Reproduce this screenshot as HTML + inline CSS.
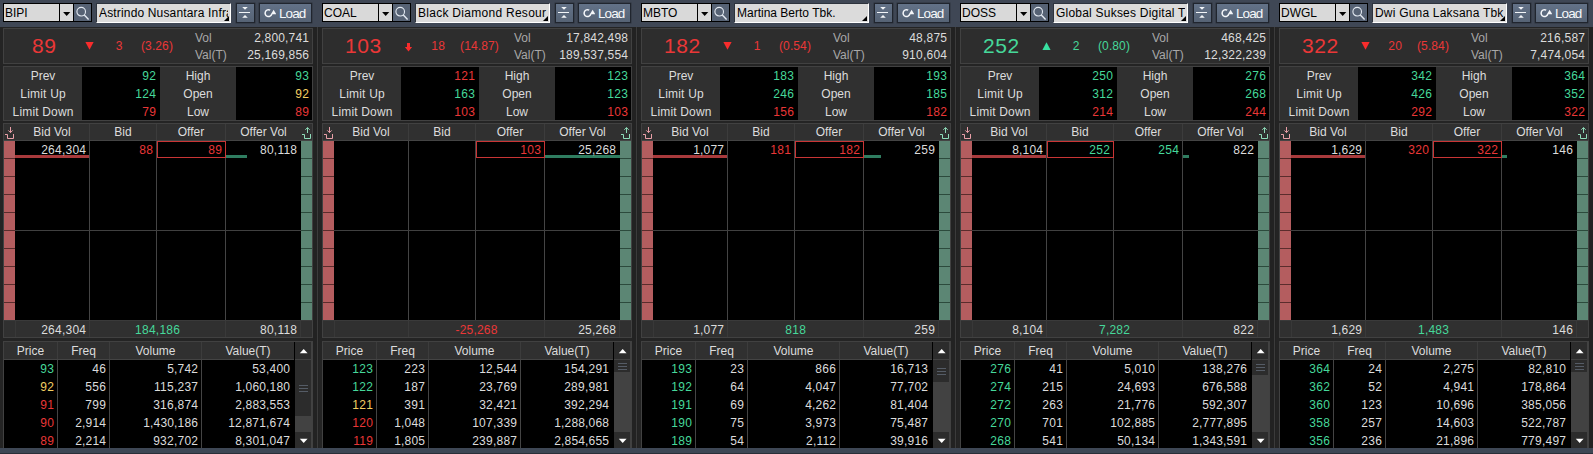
<!DOCTYPE html><html><head><meta charset="utf-8"><title>Order Book</title><style>
*{box-sizing:border-box;margin:0;padding:0}
html,body{width:1593px;height:454px;overflow:hidden;background:#242424}
body{font-family:"Liberation Sans",sans-serif;font-size:12px;color:#dcdcdc;position:relative}
.p{position:absolute;top:0;width:319px;height:454px;overflow:hidden}
.a{position:absolute}
.t{position:absolute;white-space:nowrap;line-height:14px;height:14px}
.r{text-align:right}.c{text-align:center}
.top{left:0;top:0;width:319px;height:27px;background:#3f4755}
.bot{left:0;top:448px;width:319px;height:6px;background:#3e4755;border-bottom:1px solid #2a2f38}
.gap{left:313px;top:27px;width:9px;height:421px;background:#222}
.sep{left:317px;top:27px;width:1px;height:421px;background:#3b3b3b}
.box{border:1px solid #414141;background:#2d2d2d}
.blk{background:#000}
.btn{background:linear-gradient(#637288,#566375);border:1px solid #20252e;box-shadow:0 0 0 .5px rgba(32,37,46,.55)}

.vl{width:1px;background:#444}
.hl{height:1px;background:#444}
.n{letter-spacing:.33px;margin-right:-.33px}
.n i{font-style:normal;letter-spacing:-.33px}
.n i.q{letter-spacing:0}
</style></head><body>
<div class="p" style="left:0px">
<div class="a top"></div>
<div class="a gap"></div><div class="a sep"></div>
<div class="a bot"></div>
<div class="a " style="left:3px;top:3px;width:89px;height:19px;background:#000"></div>
<div class="a " style="left:4px;top:4px;width:55px;height:17px;background:#d9d9d9"></div>
<div class="t " style="left:5px;top:6px;width:54px;color:#000;">BIPI</div>
<div class="a " style="left:60px;top:4px;width:13px;height:17px;background:#d9d9d9"></div>
<svg class="a" style="left:60px;top:4px" width="13" height="18"><path d="M3.1 8h7.2l-3.6 3.9z" fill="#000"/></svg>
<div class="a " style="left:74px;top:4px;width:17px;height:17px;background:#566274"></div>
<svg class="a" style="left:74px;top:4px" width="17" height="18"><circle cx="7.2" cy="7.7" r="4.3" fill="none" stroke="#e4eaf2" stroke-width="1.1"/><path d="M10.3 11l4.3 4.4" stroke="#e4eaf2" stroke-width="1.4" fill="none"/></svg>
<div class="a " style="left:96px;top:3px;width:135px;height:20px;background:#dbdbdb;border-bottom:1px solid #fff;border-right:1px solid #fff;border-top:1px solid #2d333d;border-left:1px solid #2d333d"></div>
<div class="t" style="left:99px;top:6px;width:129px;color:#000;overflow:hidden;letter-spacing:.16px">Astrindo Nusantara Infra</div>
<svg class="a" style="left:224px;top:16px" width="5" height="5"><path d="M5 0v5h-5z" fill="#000"/></svg>
<div class="a btn" style="left:236px;top:3px;width:18.5px;height:19.5px;"></div>
<svg class="a" style="left:236px;top:4px" width="18" height="18"><path d="M6.2 3h5.6l-2.8 2.8z M6.2 13.7h5.6l-2.8-2.8z" fill="#f2f5f8"/><path d="M3 8.5h11" stroke="#f2f5f8" stroke-width="1"/></svg>
<div class="a btn" style="left:259px;top:3px;width:53px;height:19.5px;"></div>
<svg class="a" style="left:263px;top:7px" width="13" height="13"><path d="M7.2 3.2A3.4 3.4 0 1 0 8.8 7" fill="none" stroke="#f6f8fb" stroke-width="1.5"/><path d="M7.9 7.2L10.6 2.7L13.3 7.2Z" fill="#f4f6f9"/></svg>
<div class="t " style="left:279px;top:7px;width:34px;color:#f6f8fa;font-size:13.5px;letter-spacing:-0.9px">Load</div>
<div class="a box" style="left:3px;top:28px;width:310px;height:36px;"></div>
<div class="t c" style="left:4px;top:33px;width:80px;color:#ea3737;font-size:21px;line-height:26px;height:26px;letter-spacing:.55px;text-indent:.55px">89</div>
<svg class="a" style="left:85px;top:42px" width="9" height="8"><path d="M0.4 0h8.2l-4.1 7.8z" fill="#f82c2c"/></svg>
<div class="t c" style="left:99px;top:39px;width:40px;color:#ea3737;"><span style="letter-spacing:0.326px;margin-right:-0.326px">3</span></div>
<div class="t " style="left:141px;top:39px;width:60px;color:#ea3737;"><span style="letter-spacing:0.109px;margin-right:-0.109px">(3.26)</span></div>
<div class="t " style="left:195px;top:31px;width:40px;color:#a8a8a8;">Vol</div>
<div class="t " style="left:195px;top:48px;width:40px;color:#a8a8a8;">Val(T)</div>
<div class="t r" style="left:229px;top:31px;width:80px;"><span style="letter-spacing:0.179px;margin-right:-0.179px">2,800,741</span></div>
<div class="t r" style="left:229px;top:48px;width:80px;"><span style="letter-spacing:0.194px;margin-right:-0.194px">25,169,856</span></div>
<div class="a box" style="left:3px;top:66px;width:310px;height:55px;background:#303030"></div>
<div class="a blk" style="left:82px;top:67px;width:78px;height:53px;"></div>
<div class="a blk" style="left:236px;top:67px;width:76px;height:53px;"></div>
<div class="t c" style="left:4px;top:69px;width:78px;">Prev</div>
<div class="t r" style="left:82px;top:69px;width:74px;color:#46d89a;"><span style="letter-spacing:0.326px;margin-right:-0.326px">92</span></div>
<div class="t c" style="left:160px;top:69px;width:76px;">High</div>
<div class="t r" style="left:236px;top:69px;width:73px;color:#46d89a;"><span style="letter-spacing:0.326px;margin-right:-0.326px">93</span></div>
<div class="t c" style="left:4px;top:87px;width:78px;letter-spacing:.21px;text-indent:.21px">Limit Up</div>
<div class="t r" style="left:82px;top:87px;width:74px;color:#46d89a;"><span style="letter-spacing:0.326px;margin-right:-0.326px">124</span></div>
<div class="t c" style="left:160px;top:87px;width:76px;">Open</div>
<div class="t r" style="left:236px;top:87px;width:73px;color:#f3cf62;"><span style="letter-spacing:0.326px;margin-right:-0.326px">92</span></div>
<div class="t c" style="left:4px;top:105px;width:78px;letter-spacing:.17px;text-indent:.17px">Limit Down</div>
<div class="t r" style="left:82px;top:105px;width:74px;color:#ea3737;"><span style="letter-spacing:0.326px;margin-right:-0.326px">79</span></div>
<div class="t c" style="left:160px;top:105px;width:76px;">Low</div>
<div class="t r" style="left:236px;top:105px;width:73px;color:#ea3737;"><span style="letter-spacing:0.326px;margin-right:-0.326px">89</span></div>
<div class="a box" style="left:3px;top:123px;width:310px;height:215px;background:#303030"></div>
<div class="a blk" style="left:4px;top:141px;width:297px;height:180px;"></div>
<div class="a " style="left:4px;top:141px;width:11px;height:180px;background:#b45d5f"></div>
<div class="a " style="left:301px;top:141px;width:11px;height:180px;background:#5c8674"></div>
<div class="a " style="left:4px;top:158px;width:11px;height:1px;background:#5a2c2c"></div>
<div class="a " style="left:301px;top:158px;width:11px;height:1px;background:#2c4a3c"></div>
<div class="a " style="left:4px;top:176px;width:11px;height:1px;background:#5a2c2c"></div>
<div class="a " style="left:301px;top:176px;width:11px;height:1px;background:#2c4a3c"></div>
<div class="a " style="left:4px;top:194px;width:11px;height:1px;background:#5a2c2c"></div>
<div class="a " style="left:301px;top:194px;width:11px;height:1px;background:#2c4a3c"></div>
<div class="a " style="left:4px;top:212px;width:11px;height:1px;background:#5a2c2c"></div>
<div class="a " style="left:301px;top:212px;width:11px;height:1px;background:#2c4a3c"></div>
<div class="a " style="left:4px;top:230px;width:11px;height:1px;background:#5a2c2c"></div>
<div class="a " style="left:301px;top:230px;width:11px;height:1px;background:#2c4a3c"></div>
<div class="a " style="left:4px;top:248px;width:11px;height:1px;background:#5a2c2c"></div>
<div class="a " style="left:301px;top:248px;width:11px;height:1px;background:#2c4a3c"></div>
<div class="a " style="left:4px;top:266px;width:11px;height:1px;background:#5a2c2c"></div>
<div class="a " style="left:301px;top:266px;width:11px;height:1px;background:#2c4a3c"></div>
<div class="a " style="left:4px;top:284px;width:11px;height:1px;background:#5a2c2c"></div>
<div class="a " style="left:301px;top:284px;width:11px;height:1px;background:#2c4a3c"></div>
<div class="a " style="left:4px;top:302px;width:11px;height:1px;background:#5a2c2c"></div>
<div class="a " style="left:301px;top:302px;width:11px;height:1px;background:#2c4a3c"></div>
<div class="a vl" style="left:89px;top:124px;width:1px;height:16px;background:#3c3c3c"></div>
<div class="a vl" style="left:89px;top:140px;width:1px;height:181px;"></div>
<div class="a vl" style="left:89px;top:321px;width:1px;height:16px;background:#393939"></div>
<div class="a vl" style="left:156px;top:124px;width:1px;height:16px;background:#3c3c3c"></div>
<div class="a vl" style="left:156px;top:140px;width:1px;height:181px;"></div>
<div class="a vl" style="left:225px;top:124px;width:1px;height:16px;background:#3c3c3c"></div>
<div class="a vl" style="left:225px;top:140px;width:1px;height:181px;"></div>
<div class="a vl" style="left:225px;top:321px;width:1px;height:16px;background:#393939"></div>
<div class="a vl" style="left:15px;top:321px;width:1px;height:16px;background:#383838"></div>
<div class="a vl" style="left:300px;top:321px;width:1px;height:16px;background:#383838"></div>
<div class="t c" style="left:15px;top:125px;width:74px;">Bid Vol</div>
<div class="t c" style="left:90px;top:125px;width:66px;">Bid</div>
<div class="t c" style="left:157px;top:125px;width:68px;">Offer</div>
<div class="t c" style="left:226px;top:125px;width:75px;">Offer Vol</div>
<div class="a hl" style="left:4px;top:140px;width:308px;height:1px;"></div>
<div class="a hl" style="left:15px;top:230px;width:286px;height:1px;background:#404040"></div>
<div class="a hl" style="left:4px;top:320px;width:308px;height:1px;background:#3a3a3a"></div>
<svg class="a" style="left:4px;top:126px" width="11" height="14"><path d="M1 8.5H3.5V12.5H9.5V8M6.5 1V6.6M4.3 4.4L6.5 6.6L8.7 4.4" fill="none" stroke="#eaa0a8" stroke-width="1" stroke-linejoin="round"/></svg>
<svg class="a" style="left:301px;top:126px" width="11" height="14"><path d="M1 8.5H3.5V12.5H9.5V8M6.5 7V1.6M4.3 3.8L6.5 1.6L8.7 3.8" fill="none" stroke="#8fdcb9" stroke-width="1" stroke-linejoin="round"/></svg>
<div class="a " style="left:15px;top:155px;width:74px;height:3px;background:#a83a3c"></div>
<div class="a " style="left:226px;top:155px;width:21px;height:3px;background:#2f7d60"></div>
<div class="t r" style="left:15px;top:143px;width:71px;"><span style="letter-spacing:0.232px;margin-right:-0.232px">264,304</span></div>
<div class="t r" style="left:90px;top:143px;width:63px;color:#ea3737;"><span style="letter-spacing:0.326px;margin-right:-0.326px">88</span></div>
<div class="t r" style="left:157px;top:143px;width:65px;color:#ea3737;"><span style="letter-spacing:0.326px;margin-right:-0.326px">89</span></div>
<div class="t r" style="left:226px;top:143px;width:71px;"><span style="letter-spacing:0.216px;margin-right:-0.216px">80,118</span></div>
<div class="a " style="left:157px;top:141px;width:69px;height:17px;border:1px solid #c93535"></div>
<div class="t r" style="left:15px;top:323px;width:71px;"><span style="letter-spacing:0.232px;margin-right:-0.232px">264,304</span></div>
<div class="t c" style="left:90px;top:323px;width:135px;color:#46d89a;"><span style="letter-spacing:0.232px;margin-right:-0.232px">184,186</span></div>
<div class="t r" style="left:226px;top:323px;width:71px;"><span style="letter-spacing:0.216px;margin-right:-0.216px">80,118</span></div>
<div class="a box" style="left:3px;top:341px;width:310px;height:107px;background:#303030;border-bottom:none"></div>
<div class="a blk" style="left:4px;top:360px;width:290px;height:88px;"></div>
<div class="a " style="left:294px;top:342px;width:1px;height:106px;background:#000"></div>
<div class="a vl" style="left:57px;top:342px;width:1px;height:17px;background:#3c3c3c"></div>
<div class="a vl" style="left:57px;top:359px;width:1px;height:89px;"></div>
<div class="a vl" style="left:109px;top:342px;width:1px;height:17px;background:#3c3c3c"></div>
<div class="a vl" style="left:109px;top:359px;width:1px;height:89px;"></div>
<div class="a vl" style="left:201px;top:342px;width:1px;height:17px;background:#3c3c3c"></div>
<div class="a vl" style="left:201px;top:359px;width:1px;height:89px;"></div>
<div class="t c" style="left:4px;top:344px;width:53px;">Price</div>
<div class="t c" style="left:58px;top:344px;width:51px;">Freq</div>
<div class="t c" style="left:110px;top:344px;width:91px;">Volume</div>
<div class="t c" style="left:202px;top:344px;width:92px;">Value(T)</div>
<div class="t r" style="left:4px;top:362px;width:50px;color:#46d89a;"><span style="letter-spacing:0.326px;margin-right:-0.326px">93</span></div>
<div class="t r" style="left:58px;top:362px;width:48px;"><span style="letter-spacing:0.326px;margin-right:-0.326px">46</span></div>
<div class="t r" style="left:108px;top:362px;width:90px;"><span style="letter-spacing:0.194px;margin-right:-0.194px">5,742</span></div>
<div class="t r" style="left:202px;top:362px;width:88px;"><span style="letter-spacing:0.216px;margin-right:-0.216px">53,400</span></div>
<div class="t r" style="left:4px;top:380px;width:50px;color:#f3cf62;"><span style="letter-spacing:0.326px;margin-right:-0.326px">92</span></div>
<div class="t r" style="left:58px;top:380px;width:48px;"><span style="letter-spacing:0.326px;margin-right:-0.326px">556</span></div>
<div class="t r" style="left:108px;top:380px;width:90px;"><span style="letter-spacing:0.232px;margin-right:-0.232px">115,237</span></div>
<div class="t r" style="left:202px;top:380px;width:88px;"><span style="letter-spacing:0.179px;margin-right:-0.179px">1,060,180</span></div>
<div class="t r" style="left:4px;top:398px;width:50px;color:#ea3737;"><span style="letter-spacing:0.326px;margin-right:-0.326px">91</span></div>
<div class="t r" style="left:58px;top:398px;width:48px;"><span style="letter-spacing:0.326px;margin-right:-0.326px">799</span></div>
<div class="t r" style="left:108px;top:398px;width:90px;"><span style="letter-spacing:0.232px;margin-right:-0.232px">316,874</span></div>
<div class="t r" style="left:202px;top:398px;width:88px;"><span style="letter-spacing:0.179px;margin-right:-0.179px">2,883,553</span></div>
<div class="t r" style="left:4px;top:416px;width:50px;color:#ea3737;"><span style="letter-spacing:0.326px;margin-right:-0.326px">90</span></div>
<div class="t r" style="left:58px;top:416px;width:48px;"><span style="letter-spacing:0.194px;margin-right:-0.194px">2,914</span></div>
<div class="t r" style="left:108px;top:416px;width:90px;"><span style="letter-spacing:0.179px;margin-right:-0.179px">1,430,186</span></div>
<div class="t r" style="left:202px;top:416px;width:88px;"><span style="letter-spacing:0.194px;margin-right:-0.194px">12,871,674</span></div>
<div class="t r" style="left:4px;top:434px;width:50px;color:#ea3737;"><span style="letter-spacing:0.326px;margin-right:-0.326px">89</span></div>
<div class="t r" style="left:58px;top:434px;width:48px;"><span style="letter-spacing:0.194px;margin-right:-0.194px">2,214</span></div>
<div class="t r" style="left:108px;top:434px;width:90px;"><span style="letter-spacing:0.232px;margin-right:-0.232px">932,702</span></div>
<div class="t r" style="left:202px;top:434px;width:88px;"><span style="letter-spacing:0.179px;margin-right:-0.179px">8,301,047</span></div>
<div class="a hl" style="left:4px;top:359px;width:290px;height:1px;"></div>
<div class="a " style="left:295px;top:342px;width:17px;height:106px;background:#424242"></div>
<div class="a " style="left:295px;top:342px;width:16px;height:17px;background:#2c2c2c"></div>
<div class="a " style="left:295px;top:432px;width:16px;height:16px;background:#2c2c2c"></div>
<div class="a " style="left:295px;top:360px;width:16px;height:56px;background:#2c2c2c"></div>
<svg class="a" style="left:296px;top:384px" width="16" height="9"><path d="M3 1.5h9M3 4.5h9M3 7.5h9" stroke="#555c66" stroke-width="1"/></svg>
<svg class="a" style="left:296px;top:342px" width="16" height="18"><path d="M3.8 11.3h7.8l-3.9-4.3z" fill="#fff"/></svg>
<svg class="a" style="left:296px;top:432px" width="16" height="16"><path d="M3.8 6.7h7.8l-3.9 4.3z" fill="#fff"/></svg>
</div>
<div class="p" style="left:319px">
<div class="a top"></div>
<div class="a gap"></div><div class="a sep"></div>
<div class="a bot"></div>
<div class="a " style="left:3px;top:3px;width:89px;height:19px;background:#000"></div>
<div class="a " style="left:4px;top:4px;width:55px;height:17px;background:#d9d9d9"></div>
<div class="t " style="left:5px;top:6px;width:54px;color:#000;">COAL</div>
<div class="a " style="left:60px;top:4px;width:13px;height:17px;background:#d9d9d9"></div>
<svg class="a" style="left:60px;top:4px" width="13" height="18"><path d="M3.1 8h7.2l-3.6 3.9z" fill="#000"/></svg>
<div class="a " style="left:74px;top:4px;width:17px;height:17px;background:#566274"></div>
<svg class="a" style="left:74px;top:4px" width="17" height="18"><circle cx="7.2" cy="7.7" r="4.3" fill="none" stroke="#e4eaf2" stroke-width="1.1"/><path d="M10.3 11l4.3 4.4" stroke="#e4eaf2" stroke-width="1.4" fill="none"/></svg>
<div class="a " style="left:96px;top:3px;width:135px;height:20px;background:#dbdbdb;border-bottom:1px solid #fff;border-right:1px solid #fff;border-top:1px solid #2d333d;border-left:1px solid #2d333d"></div>
<div class="t" style="left:99px;top:6px;width:129px;color:#000;overflow:hidden;letter-spacing:.28px">Black Diamond Resour</div>
<svg class="a" style="left:224px;top:16px" width="5" height="5"><path d="M5 0v5h-5z" fill="#000"/></svg>
<div class="a btn" style="left:236px;top:3px;width:18.5px;height:19.5px;"></div>
<svg class="a" style="left:236px;top:4px" width="18" height="18"><path d="M6.2 3h5.6l-2.8 2.8z M6.2 13.7h5.6l-2.8-2.8z" fill="#f2f5f8"/><path d="M3 8.5h11" stroke="#f2f5f8" stroke-width="1"/></svg>
<div class="a btn" style="left:259px;top:3px;width:53px;height:19.5px;"></div>
<svg class="a" style="left:263px;top:7px" width="13" height="13"><path d="M7.2 3.2A3.4 3.4 0 1 0 8.8 7" fill="none" stroke="#f6f8fb" stroke-width="1.5"/><path d="M7.9 7.2L10.6 2.7L13.3 7.2Z" fill="#f4f6f9"/></svg>
<div class="t " style="left:279px;top:7px;width:34px;color:#f6f8fa;font-size:13.5px;letter-spacing:-0.9px">Load</div>
<div class="a box" style="left:3px;top:28px;width:310px;height:36px;"></div>
<div class="t c" style="left:4px;top:33px;width:80px;color:#ea3737;font-size:21px;line-height:26px;height:26px;letter-spacing:.55px;text-indent:.55px">103</div>
<svg class="a" style="left:85px;top:42.7px" width="9" height="9"><path d="M3 0h3v4h2.15L4.5 8.4L0.85 4H3z" fill="#f82c2c"/></svg>
<div class="t c" style="left:99px;top:39px;width:40px;color:#ea3737;"><span style="letter-spacing:0.326px;margin-right:-0.326px">18</span></div>
<div class="t " style="left:141px;top:39px;width:60px;color:#ea3737;"><span style="letter-spacing:0.14px;margin-right:-0.14px">(14.87)</span></div>
<div class="t " style="left:195px;top:31px;width:40px;color:#a8a8a8;">Vol</div>
<div class="t " style="left:195px;top:48px;width:40px;color:#a8a8a8;">Val(T)</div>
<div class="t r" style="left:229px;top:31px;width:80px;"><span style="letter-spacing:0.194px;margin-right:-0.194px">17,842,498</span></div>
<div class="t r" style="left:229px;top:48px;width:80px;"><span style="letter-spacing:0.206px;margin-right:-0.206px">189,537,554</span></div>
<div class="a box" style="left:3px;top:66px;width:310px;height:55px;background:#303030"></div>
<div class="a blk" style="left:82px;top:67px;width:78px;height:53px;"></div>
<div class="a blk" style="left:236px;top:67px;width:76px;height:53px;"></div>
<div class="t c" style="left:4px;top:69px;width:78px;">Prev</div>
<div class="t r" style="left:82px;top:69px;width:74px;color:#ea3737;"><span style="letter-spacing:0.326px;margin-right:-0.326px">121</span></div>
<div class="t c" style="left:160px;top:69px;width:76px;">High</div>
<div class="t r" style="left:236px;top:69px;width:73px;color:#46d89a;"><span style="letter-spacing:0.326px;margin-right:-0.326px">123</span></div>
<div class="t c" style="left:4px;top:87px;width:78px;letter-spacing:.21px;text-indent:.21px">Limit Up</div>
<div class="t r" style="left:82px;top:87px;width:74px;color:#46d89a;"><span style="letter-spacing:0.326px;margin-right:-0.326px">163</span></div>
<div class="t c" style="left:160px;top:87px;width:76px;">Open</div>
<div class="t r" style="left:236px;top:87px;width:73px;color:#46d89a;"><span style="letter-spacing:0.326px;margin-right:-0.326px">123</span></div>
<div class="t c" style="left:4px;top:105px;width:78px;letter-spacing:.17px;text-indent:.17px">Limit Down</div>
<div class="t r" style="left:82px;top:105px;width:74px;color:#ea3737;"><span style="letter-spacing:0.326px;margin-right:-0.326px">103</span></div>
<div class="t c" style="left:160px;top:105px;width:76px;">Low</div>
<div class="t r" style="left:236px;top:105px;width:73px;color:#ea3737;"><span style="letter-spacing:0.326px;margin-right:-0.326px">103</span></div>
<div class="a box" style="left:3px;top:123px;width:310px;height:215px;background:#303030"></div>
<div class="a blk" style="left:4px;top:141px;width:297px;height:180px;"></div>
<div class="a " style="left:4px;top:141px;width:11px;height:180px;background:#b45d5f"></div>
<div class="a " style="left:301px;top:141px;width:11px;height:180px;background:#5c8674"></div>
<div class="a " style="left:4px;top:158px;width:11px;height:1px;background:#5a2c2c"></div>
<div class="a " style="left:301px;top:158px;width:11px;height:1px;background:#2c4a3c"></div>
<div class="a " style="left:4px;top:176px;width:11px;height:1px;background:#5a2c2c"></div>
<div class="a " style="left:301px;top:176px;width:11px;height:1px;background:#2c4a3c"></div>
<div class="a " style="left:4px;top:194px;width:11px;height:1px;background:#5a2c2c"></div>
<div class="a " style="left:301px;top:194px;width:11px;height:1px;background:#2c4a3c"></div>
<div class="a " style="left:4px;top:212px;width:11px;height:1px;background:#5a2c2c"></div>
<div class="a " style="left:301px;top:212px;width:11px;height:1px;background:#2c4a3c"></div>
<div class="a " style="left:4px;top:230px;width:11px;height:1px;background:#5a2c2c"></div>
<div class="a " style="left:301px;top:230px;width:11px;height:1px;background:#2c4a3c"></div>
<div class="a " style="left:4px;top:248px;width:11px;height:1px;background:#5a2c2c"></div>
<div class="a " style="left:301px;top:248px;width:11px;height:1px;background:#2c4a3c"></div>
<div class="a " style="left:4px;top:266px;width:11px;height:1px;background:#5a2c2c"></div>
<div class="a " style="left:301px;top:266px;width:11px;height:1px;background:#2c4a3c"></div>
<div class="a " style="left:4px;top:284px;width:11px;height:1px;background:#5a2c2c"></div>
<div class="a " style="left:301px;top:284px;width:11px;height:1px;background:#2c4a3c"></div>
<div class="a " style="left:4px;top:302px;width:11px;height:1px;background:#5a2c2c"></div>
<div class="a " style="left:301px;top:302px;width:11px;height:1px;background:#2c4a3c"></div>
<div class="a vl" style="left:89px;top:124px;width:1px;height:16px;background:#3c3c3c"></div>
<div class="a vl" style="left:89px;top:140px;width:1px;height:181px;"></div>
<div class="a vl" style="left:89px;top:321px;width:1px;height:16px;background:#393939"></div>
<div class="a vl" style="left:156px;top:124px;width:1px;height:16px;background:#3c3c3c"></div>
<div class="a vl" style="left:156px;top:140px;width:1px;height:181px;"></div>
<div class="a vl" style="left:225px;top:124px;width:1px;height:16px;background:#3c3c3c"></div>
<div class="a vl" style="left:225px;top:140px;width:1px;height:181px;"></div>
<div class="a vl" style="left:225px;top:321px;width:1px;height:16px;background:#393939"></div>
<div class="a vl" style="left:15px;top:321px;width:1px;height:16px;background:#383838"></div>
<div class="a vl" style="left:300px;top:321px;width:1px;height:16px;background:#383838"></div>
<div class="t c" style="left:15px;top:125px;width:74px;">Bid Vol</div>
<div class="t c" style="left:90px;top:125px;width:66px;">Bid</div>
<div class="t c" style="left:157px;top:125px;width:68px;">Offer</div>
<div class="t c" style="left:226px;top:125px;width:75px;">Offer Vol</div>
<div class="a hl" style="left:4px;top:140px;width:308px;height:1px;"></div>
<div class="a hl" style="left:15px;top:230px;width:286px;height:1px;background:#404040"></div>
<div class="a hl" style="left:4px;top:320px;width:308px;height:1px;background:#3a3a3a"></div>
<svg class="a" style="left:4px;top:126px" width="11" height="14"><path d="M1 8.5H3.5V12.5H9.5V8M6.5 1V6.6M4.3 4.4L6.5 6.6L8.7 4.4" fill="none" stroke="#eaa0a8" stroke-width="1" stroke-linejoin="round"/></svg>
<svg class="a" style="left:301px;top:126px" width="11" height="14"><path d="M1 8.5H3.5V12.5H9.5V8M6.5 7V1.6M4.3 3.8L6.5 1.6L8.7 3.8" fill="none" stroke="#8fdcb9" stroke-width="1" stroke-linejoin="round"/></svg>
<div class="a " style="left:226px;top:155px;width:75px;height:3px;background:#2f7d60"></div>
<div class="t r" style="left:15px;top:143px;width:71px;"></div>
<div class="t r" style="left:90px;top:143px;width:63px;color:#ea3737;"></div>
<div class="t r" style="left:157px;top:143px;width:65px;color:#ea3737;"><span style="letter-spacing:0.326px;margin-right:-0.326px">103</span></div>
<div class="t r" style="left:226px;top:143px;width:71px;"><span style="letter-spacing:0.216px;margin-right:-0.216px">25,268</span></div>
<div class="a " style="left:157px;top:141px;width:69px;height:17px;border:1px solid #c93535"></div>
<div class="t r" style="left:15px;top:323px;width:71px;"></div>
<div class="t c" style="left:90px;top:323px;width:135px;color:#ea3737;"><span style="letter-spacing:0.186px;margin-right:-0.186px">-25,268</span></div>
<div class="t r" style="left:226px;top:323px;width:71px;"><span style="letter-spacing:0.216px;margin-right:-0.216px">25,268</span></div>
<div class="a box" style="left:3px;top:341px;width:310px;height:107px;background:#303030;border-bottom:none"></div>
<div class="a blk" style="left:4px;top:360px;width:290px;height:88px;"></div>
<div class="a " style="left:294px;top:342px;width:1px;height:106px;background:#000"></div>
<div class="a vl" style="left:57px;top:342px;width:1px;height:17px;background:#3c3c3c"></div>
<div class="a vl" style="left:57px;top:359px;width:1px;height:89px;"></div>
<div class="a vl" style="left:109px;top:342px;width:1px;height:17px;background:#3c3c3c"></div>
<div class="a vl" style="left:109px;top:359px;width:1px;height:89px;"></div>
<div class="a vl" style="left:201px;top:342px;width:1px;height:17px;background:#3c3c3c"></div>
<div class="a vl" style="left:201px;top:359px;width:1px;height:89px;"></div>
<div class="t c" style="left:4px;top:344px;width:53px;">Price</div>
<div class="t c" style="left:58px;top:344px;width:51px;">Freq</div>
<div class="t c" style="left:110px;top:344px;width:91px;">Volume</div>
<div class="t c" style="left:202px;top:344px;width:92px;">Value(T)</div>
<div class="t r" style="left:4px;top:362px;width:50px;color:#46d89a;"><span style="letter-spacing:0.326px;margin-right:-0.326px">123</span></div>
<div class="t r" style="left:58px;top:362px;width:48px;"><span style="letter-spacing:0.326px;margin-right:-0.326px">223</span></div>
<div class="t r" style="left:108px;top:362px;width:90px;"><span style="letter-spacing:0.216px;margin-right:-0.216px">12,544</span></div>
<div class="t r" style="left:202px;top:362px;width:88px;"><span style="letter-spacing:0.232px;margin-right:-0.232px">154,291</span></div>
<div class="t r" style="left:4px;top:380px;width:50px;color:#46d89a;"><span style="letter-spacing:0.326px;margin-right:-0.326px">122</span></div>
<div class="t r" style="left:58px;top:380px;width:48px;"><span style="letter-spacing:0.326px;margin-right:-0.326px">187</span></div>
<div class="t r" style="left:108px;top:380px;width:90px;"><span style="letter-spacing:0.216px;margin-right:-0.216px">23,769</span></div>
<div class="t r" style="left:202px;top:380px;width:88px;"><span style="letter-spacing:0.232px;margin-right:-0.232px">289,981</span></div>
<div class="t r" style="left:4px;top:398px;width:50px;color:#f3cf62;"><span style="letter-spacing:0.326px;margin-right:-0.326px">121</span></div>
<div class="t r" style="left:58px;top:398px;width:48px;"><span style="letter-spacing:0.326px;margin-right:-0.326px">391</span></div>
<div class="t r" style="left:108px;top:398px;width:90px;"><span style="letter-spacing:0.216px;margin-right:-0.216px">32,421</span></div>
<div class="t r" style="left:202px;top:398px;width:88px;"><span style="letter-spacing:0.232px;margin-right:-0.232px">392,294</span></div>
<div class="t r" style="left:4px;top:416px;width:50px;color:#ea3737;"><span style="letter-spacing:0.326px;margin-right:-0.326px">120</span></div>
<div class="t r" style="left:58px;top:416px;width:48px;"><span style="letter-spacing:0.194px;margin-right:-0.194px">1,048</span></div>
<div class="t r" style="left:108px;top:416px;width:90px;"><span style="letter-spacing:0.232px;margin-right:-0.232px">107,339</span></div>
<div class="t r" style="left:202px;top:416px;width:88px;"><span style="letter-spacing:0.179px;margin-right:-0.179px">1,288,068</span></div>
<div class="t r" style="left:4px;top:434px;width:50px;color:#ea3737;"><span style="letter-spacing:0.326px;margin-right:-0.326px">119</span></div>
<div class="t r" style="left:58px;top:434px;width:48px;"><span style="letter-spacing:0.194px;margin-right:-0.194px">1,805</span></div>
<div class="t r" style="left:108px;top:434px;width:90px;"><span style="letter-spacing:0.232px;margin-right:-0.232px">239,887</span></div>
<div class="t r" style="left:202px;top:434px;width:88px;"><span style="letter-spacing:0.179px;margin-right:-0.179px">2,854,655</span></div>
<div class="a hl" style="left:4px;top:359px;width:290px;height:1px;"></div>
<div class="a " style="left:295px;top:342px;width:17px;height:106px;background:#424242"></div>
<div class="a " style="left:295px;top:342px;width:16px;height:17px;background:#2c2c2c"></div>
<div class="a " style="left:295px;top:432px;width:16px;height:16px;background:#2c2c2c"></div>
<div class="a " style="left:295px;top:360px;width:16px;height:12px;background:#2c2c2c"></div>
<svg class="a" style="left:296px;top:362px" width="16" height="9"><path d="M3 1.5h9M3 4.5h9M3 7.5h9" stroke="#555c66" stroke-width="1"/></svg>
<svg class="a" style="left:296px;top:342px" width="16" height="18"><path d="M3.8 11.3h7.8l-3.9-4.3z" fill="#fff"/></svg>
<svg class="a" style="left:296px;top:432px" width="16" height="16"><path d="M3.8 6.7h7.8l-3.9 4.3z" fill="#fff"/></svg>
</div>
<div class="p" style="left:638px">
<div class="a top"></div>
<div class="a gap"></div><div class="a sep"></div>
<div class="a bot"></div>
<div class="a " style="left:3px;top:3px;width:89px;height:19px;background:#000"></div>
<div class="a " style="left:4px;top:4px;width:55px;height:17px;background:#d9d9d9"></div>
<div class="t " style="left:5px;top:6px;width:54px;color:#000;">MBTO</div>
<div class="a " style="left:60px;top:4px;width:13px;height:17px;background:#d9d9d9"></div>
<svg class="a" style="left:60px;top:4px" width="13" height="18"><path d="M3.1 8h7.2l-3.6 3.9z" fill="#000"/></svg>
<div class="a " style="left:74px;top:4px;width:17px;height:17px;background:#566274"></div>
<svg class="a" style="left:74px;top:4px" width="17" height="18"><circle cx="7.2" cy="7.7" r="4.3" fill="none" stroke="#e4eaf2" stroke-width="1.1"/><path d="M10.3 11l4.3 4.4" stroke="#e4eaf2" stroke-width="1.4" fill="none"/></svg>
<div class="a " style="left:96px;top:3px;width:135px;height:20px;background:#dbdbdb;border-bottom:1px solid #fff;border-right:1px solid #fff;border-top:1px solid #2d333d;border-left:1px solid #2d333d"></div>
<div class="t" style="left:99px;top:6px;width:129px;color:#000;overflow:hidden;letter-spacing:0px">Martina Berto Tbk.</div>
<svg class="a" style="left:224px;top:16px" width="5" height="5"><path d="M5 0v5h-5z" fill="#000"/></svg>
<div class="a btn" style="left:236px;top:3px;width:18.5px;height:19.5px;"></div>
<svg class="a" style="left:236px;top:4px" width="18" height="18"><path d="M6.2 3h5.6l-2.8 2.8z M6.2 13.7h5.6l-2.8-2.8z" fill="#f2f5f8"/><path d="M3 8.5h11" stroke="#f2f5f8" stroke-width="1"/></svg>
<div class="a btn" style="left:259px;top:3px;width:53px;height:19.5px;"></div>
<svg class="a" style="left:263px;top:7px" width="13" height="13"><path d="M7.2 3.2A3.4 3.4 0 1 0 8.8 7" fill="none" stroke="#f6f8fb" stroke-width="1.5"/><path d="M7.9 7.2L10.6 2.7L13.3 7.2Z" fill="#f4f6f9"/></svg>
<div class="t " style="left:279px;top:7px;width:34px;color:#f6f8fa;font-size:13.5px;letter-spacing:-0.9px">Load</div>
<div class="a box" style="left:3px;top:28px;width:310px;height:36px;"></div>
<div class="t c" style="left:4px;top:33px;width:80px;color:#ea3737;font-size:21px;line-height:26px;height:26px;letter-spacing:.55px;text-indent:.55px">182</div>
<svg class="a" style="left:85px;top:42px" width="9" height="8"><path d="M0.4 0h8.2l-4.1 7.8z" fill="#f82c2c"/></svg>
<div class="t c" style="left:99px;top:39px;width:40px;color:#ea3737;"><span style="letter-spacing:0.326px;margin-right:-0.326px">1</span></div>
<div class="t " style="left:141px;top:39px;width:60px;color:#ea3737;"><span style="letter-spacing:0.109px;margin-right:-0.109px">(0.54)</span></div>
<div class="t " style="left:195px;top:31px;width:40px;color:#a8a8a8;">Vol</div>
<div class="t " style="left:195px;top:48px;width:40px;color:#a8a8a8;">Val(T)</div>
<div class="t r" style="left:229px;top:31px;width:80px;"><span style="letter-spacing:0.216px;margin-right:-0.216px">48,875</span></div>
<div class="t r" style="left:229px;top:48px;width:80px;"><span style="letter-spacing:0.232px;margin-right:-0.232px">910,604</span></div>
<div class="a box" style="left:3px;top:66px;width:310px;height:55px;background:#303030"></div>
<div class="a blk" style="left:82px;top:67px;width:78px;height:53px;"></div>
<div class="a blk" style="left:236px;top:67px;width:76px;height:53px;"></div>
<div class="t c" style="left:4px;top:69px;width:78px;">Prev</div>
<div class="t r" style="left:82px;top:69px;width:74px;color:#46d89a;"><span style="letter-spacing:0.326px;margin-right:-0.326px">183</span></div>
<div class="t c" style="left:160px;top:69px;width:76px;">High</div>
<div class="t r" style="left:236px;top:69px;width:73px;color:#46d89a;"><span style="letter-spacing:0.326px;margin-right:-0.326px">193</span></div>
<div class="t c" style="left:4px;top:87px;width:78px;letter-spacing:.21px;text-indent:.21px">Limit Up</div>
<div class="t r" style="left:82px;top:87px;width:74px;color:#46d89a;"><span style="letter-spacing:0.326px;margin-right:-0.326px">246</span></div>
<div class="t c" style="left:160px;top:87px;width:76px;">Open</div>
<div class="t r" style="left:236px;top:87px;width:73px;color:#46d89a;"><span style="letter-spacing:0.326px;margin-right:-0.326px">185</span></div>
<div class="t c" style="left:4px;top:105px;width:78px;letter-spacing:.17px;text-indent:.17px">Limit Down</div>
<div class="t r" style="left:82px;top:105px;width:74px;color:#ea3737;"><span style="letter-spacing:0.326px;margin-right:-0.326px">156</span></div>
<div class="t c" style="left:160px;top:105px;width:76px;">Low</div>
<div class="t r" style="left:236px;top:105px;width:73px;color:#ea3737;"><span style="letter-spacing:0.326px;margin-right:-0.326px">182</span></div>
<div class="a box" style="left:3px;top:123px;width:310px;height:215px;background:#303030"></div>
<div class="a blk" style="left:4px;top:141px;width:297px;height:180px;"></div>
<div class="a " style="left:4px;top:141px;width:11px;height:180px;background:#b45d5f"></div>
<div class="a " style="left:301px;top:141px;width:11px;height:180px;background:#5c8674"></div>
<div class="a " style="left:4px;top:158px;width:11px;height:1px;background:#5a2c2c"></div>
<div class="a " style="left:301px;top:158px;width:11px;height:1px;background:#2c4a3c"></div>
<div class="a " style="left:4px;top:176px;width:11px;height:1px;background:#5a2c2c"></div>
<div class="a " style="left:301px;top:176px;width:11px;height:1px;background:#2c4a3c"></div>
<div class="a " style="left:4px;top:194px;width:11px;height:1px;background:#5a2c2c"></div>
<div class="a " style="left:301px;top:194px;width:11px;height:1px;background:#2c4a3c"></div>
<div class="a " style="left:4px;top:212px;width:11px;height:1px;background:#5a2c2c"></div>
<div class="a " style="left:301px;top:212px;width:11px;height:1px;background:#2c4a3c"></div>
<div class="a " style="left:4px;top:230px;width:11px;height:1px;background:#5a2c2c"></div>
<div class="a " style="left:301px;top:230px;width:11px;height:1px;background:#2c4a3c"></div>
<div class="a " style="left:4px;top:248px;width:11px;height:1px;background:#5a2c2c"></div>
<div class="a " style="left:301px;top:248px;width:11px;height:1px;background:#2c4a3c"></div>
<div class="a " style="left:4px;top:266px;width:11px;height:1px;background:#5a2c2c"></div>
<div class="a " style="left:301px;top:266px;width:11px;height:1px;background:#2c4a3c"></div>
<div class="a " style="left:4px;top:284px;width:11px;height:1px;background:#5a2c2c"></div>
<div class="a " style="left:301px;top:284px;width:11px;height:1px;background:#2c4a3c"></div>
<div class="a " style="left:4px;top:302px;width:11px;height:1px;background:#5a2c2c"></div>
<div class="a " style="left:301px;top:302px;width:11px;height:1px;background:#2c4a3c"></div>
<div class="a vl" style="left:89px;top:124px;width:1px;height:16px;background:#3c3c3c"></div>
<div class="a vl" style="left:89px;top:140px;width:1px;height:181px;"></div>
<div class="a vl" style="left:89px;top:321px;width:1px;height:16px;background:#393939"></div>
<div class="a vl" style="left:156px;top:124px;width:1px;height:16px;background:#3c3c3c"></div>
<div class="a vl" style="left:156px;top:140px;width:1px;height:181px;"></div>
<div class="a vl" style="left:225px;top:124px;width:1px;height:16px;background:#3c3c3c"></div>
<div class="a vl" style="left:225px;top:140px;width:1px;height:181px;"></div>
<div class="a vl" style="left:225px;top:321px;width:1px;height:16px;background:#393939"></div>
<div class="a vl" style="left:15px;top:321px;width:1px;height:16px;background:#383838"></div>
<div class="a vl" style="left:300px;top:321px;width:1px;height:16px;background:#383838"></div>
<div class="t c" style="left:15px;top:125px;width:74px;">Bid Vol</div>
<div class="t c" style="left:90px;top:125px;width:66px;">Bid</div>
<div class="t c" style="left:157px;top:125px;width:68px;">Offer</div>
<div class="t c" style="left:226px;top:125px;width:75px;">Offer Vol</div>
<div class="a hl" style="left:4px;top:140px;width:308px;height:1px;"></div>
<div class="a hl" style="left:15px;top:230px;width:286px;height:1px;background:#404040"></div>
<div class="a hl" style="left:4px;top:320px;width:308px;height:1px;background:#3a3a3a"></div>
<svg class="a" style="left:4px;top:126px" width="11" height="14"><path d="M1 8.5H3.5V12.5H9.5V8M6.5 1V6.6M4.3 4.4L6.5 6.6L8.7 4.4" fill="none" stroke="#eaa0a8" stroke-width="1" stroke-linejoin="round"/></svg>
<svg class="a" style="left:301px;top:126px" width="11" height="14"><path d="M1 8.5H3.5V12.5H9.5V8M6.5 7V1.6M4.3 3.8L6.5 1.6L8.7 3.8" fill="none" stroke="#8fdcb9" stroke-width="1" stroke-linejoin="round"/></svg>
<div class="a " style="left:15px;top:155px;width:74px;height:3px;background:#a83a3c"></div>
<div class="a " style="left:226px;top:155px;width:17px;height:3px;background:#2f7d60"></div>
<div class="t r" style="left:15px;top:143px;width:71px;"><span style="letter-spacing:0.194px;margin-right:-0.194px">1,077</span></div>
<div class="t r" style="left:90px;top:143px;width:63px;color:#ea3737;"><span style="letter-spacing:0.326px;margin-right:-0.326px">181</span></div>
<div class="t r" style="left:157px;top:143px;width:65px;color:#ea3737;"><span style="letter-spacing:0.326px;margin-right:-0.326px">182</span></div>
<div class="t r" style="left:226px;top:143px;width:71px;"><span style="letter-spacing:0.326px;margin-right:-0.326px">259</span></div>
<div class="a " style="left:157px;top:141px;width:69px;height:17px;border:1px solid #c93535"></div>
<div class="t r" style="left:15px;top:323px;width:71px;"><span style="letter-spacing:0.194px;margin-right:-0.194px">1,077</span></div>
<div class="t c" style="left:90px;top:323px;width:135px;color:#46d89a;"><span style="letter-spacing:0.326px;margin-right:-0.326px">818</span></div>
<div class="t r" style="left:226px;top:323px;width:71px;"><span style="letter-spacing:0.326px;margin-right:-0.326px">259</span></div>
<div class="a box" style="left:3px;top:341px;width:310px;height:107px;background:#303030;border-bottom:none"></div>
<div class="a blk" style="left:4px;top:360px;width:290px;height:88px;"></div>
<div class="a " style="left:294px;top:342px;width:1px;height:106px;background:#000"></div>
<div class="a vl" style="left:57px;top:342px;width:1px;height:17px;background:#3c3c3c"></div>
<div class="a vl" style="left:57px;top:359px;width:1px;height:89px;"></div>
<div class="a vl" style="left:109px;top:342px;width:1px;height:17px;background:#3c3c3c"></div>
<div class="a vl" style="left:109px;top:359px;width:1px;height:89px;"></div>
<div class="a vl" style="left:201px;top:342px;width:1px;height:17px;background:#3c3c3c"></div>
<div class="a vl" style="left:201px;top:359px;width:1px;height:89px;"></div>
<div class="t c" style="left:4px;top:344px;width:53px;">Price</div>
<div class="t c" style="left:58px;top:344px;width:51px;">Freq</div>
<div class="t c" style="left:110px;top:344px;width:91px;">Volume</div>
<div class="t c" style="left:202px;top:344px;width:92px;">Value(T)</div>
<div class="t r" style="left:4px;top:362px;width:50px;color:#46d89a;"><span style="letter-spacing:0.326px;margin-right:-0.326px">193</span></div>
<div class="t r" style="left:58px;top:362px;width:48px;"><span style="letter-spacing:0.326px;margin-right:-0.326px">23</span></div>
<div class="t r" style="left:108px;top:362px;width:90px;"><span style="letter-spacing:0.326px;margin-right:-0.326px">866</span></div>
<div class="t r" style="left:202px;top:362px;width:88px;"><span style="letter-spacing:0.216px;margin-right:-0.216px">16,713</span></div>
<div class="t r" style="left:4px;top:380px;width:50px;color:#46d89a;"><span style="letter-spacing:0.326px;margin-right:-0.326px">192</span></div>
<div class="t r" style="left:58px;top:380px;width:48px;"><span style="letter-spacing:0.326px;margin-right:-0.326px">64</span></div>
<div class="t r" style="left:108px;top:380px;width:90px;"><span style="letter-spacing:0.194px;margin-right:-0.194px">4,047</span></div>
<div class="t r" style="left:202px;top:380px;width:88px;"><span style="letter-spacing:0.216px;margin-right:-0.216px">77,702</span></div>
<div class="t r" style="left:4px;top:398px;width:50px;color:#46d89a;"><span style="letter-spacing:0.326px;margin-right:-0.326px">191</span></div>
<div class="t r" style="left:58px;top:398px;width:48px;"><span style="letter-spacing:0.326px;margin-right:-0.326px">69</span></div>
<div class="t r" style="left:108px;top:398px;width:90px;"><span style="letter-spacing:0.194px;margin-right:-0.194px">4,262</span></div>
<div class="t r" style="left:202px;top:398px;width:88px;"><span style="letter-spacing:0.216px;margin-right:-0.216px">81,404</span></div>
<div class="t r" style="left:4px;top:416px;width:50px;color:#46d89a;"><span style="letter-spacing:0.326px;margin-right:-0.326px">190</span></div>
<div class="t r" style="left:58px;top:416px;width:48px;"><span style="letter-spacing:0.326px;margin-right:-0.326px">75</span></div>
<div class="t r" style="left:108px;top:416px;width:90px;"><span style="letter-spacing:0.194px;margin-right:-0.194px">3,973</span></div>
<div class="t r" style="left:202px;top:416px;width:88px;"><span style="letter-spacing:0.216px;margin-right:-0.216px">75,487</span></div>
<div class="t r" style="left:4px;top:434px;width:50px;color:#46d89a;"><span style="letter-spacing:0.326px;margin-right:-0.326px">189</span></div>
<div class="t r" style="left:58px;top:434px;width:48px;"><span style="letter-spacing:0.326px;margin-right:-0.326px">54</span></div>
<div class="t r" style="left:108px;top:434px;width:90px;"><span style="letter-spacing:0.194px;margin-right:-0.194px">2,112</span></div>
<div class="t r" style="left:202px;top:434px;width:88px;"><span style="letter-spacing:0.216px;margin-right:-0.216px">39,916</span></div>
<div class="a hl" style="left:4px;top:359px;width:290px;height:1px;"></div>
<div class="a " style="left:295px;top:342px;width:17px;height:106px;background:#424242"></div>
<div class="a " style="left:295px;top:342px;width:16px;height:17px;background:#2c2c2c"></div>
<div class="a " style="left:295px;top:432px;width:16px;height:16px;background:#2c2c2c"></div>
<div class="a " style="left:295px;top:360px;width:16px;height:22px;background:#2c2c2c"></div>
<svg class="a" style="left:296px;top:367px" width="16" height="9"><path d="M3 1.5h9M3 4.5h9M3 7.5h9" stroke="#555c66" stroke-width="1"/></svg>
<svg class="a" style="left:296px;top:342px" width="16" height="18"><path d="M3.8 11.3h7.8l-3.9-4.3z" fill="#fff"/></svg>
<svg class="a" style="left:296px;top:432px" width="16" height="16"><path d="M3.8 6.7h7.8l-3.9 4.3z" fill="#fff"/></svg>
</div>
<div class="p" style="left:957px">
<div class="a top"></div>
<div class="a gap"></div><div class="a sep"></div>
<div class="a bot"></div>
<div class="a " style="left:3px;top:3px;width:89px;height:19px;background:#000"></div>
<div class="a " style="left:4px;top:4px;width:55px;height:17px;background:#d9d9d9"></div>
<div class="t " style="left:5px;top:6px;width:54px;color:#000;">DOSS</div>
<div class="a " style="left:60px;top:4px;width:13px;height:17px;background:#d9d9d9"></div>
<svg class="a" style="left:60px;top:4px" width="13" height="18"><path d="M3.1 8h7.2l-3.6 3.9z" fill="#000"/></svg>
<div class="a " style="left:74px;top:4px;width:17px;height:17px;background:#566274"></div>
<svg class="a" style="left:74px;top:4px" width="17" height="18"><circle cx="7.2" cy="7.7" r="4.3" fill="none" stroke="#e4eaf2" stroke-width="1.1"/><path d="M10.3 11l4.3 4.4" stroke="#e4eaf2" stroke-width="1.4" fill="none"/></svg>
<div class="a " style="left:96px;top:3px;width:135px;height:20px;background:#dbdbdb;border-bottom:1px solid #fff;border-right:1px solid #fff;border-top:1px solid #2d333d;border-left:1px solid #2d333d"></div>
<div class="t" style="left:99px;top:6px;width:129px;color:#000;overflow:hidden;letter-spacing:.22px">Global Sukses Digital T</div>
<svg class="a" style="left:224px;top:16px" width="5" height="5"><path d="M5 0v5h-5z" fill="#000"/></svg>
<div class="a btn" style="left:236px;top:3px;width:18.5px;height:19.5px;"></div>
<svg class="a" style="left:236px;top:4px" width="18" height="18"><path d="M6.2 3h5.6l-2.8 2.8z M6.2 13.7h5.6l-2.8-2.8z" fill="#f2f5f8"/><path d="M3 8.5h11" stroke="#f2f5f8" stroke-width="1"/></svg>
<div class="a btn" style="left:259px;top:3px;width:53px;height:19.5px;"></div>
<svg class="a" style="left:263px;top:7px" width="13" height="13"><path d="M7.2 3.2A3.4 3.4 0 1 0 8.8 7" fill="none" stroke="#f6f8fb" stroke-width="1.5"/><path d="M7.9 7.2L10.6 2.7L13.3 7.2Z" fill="#f4f6f9"/></svg>
<div class="t " style="left:279px;top:7px;width:34px;color:#f6f8fa;font-size:13.5px;letter-spacing:-0.9px">Load</div>
<div class="a box" style="left:3px;top:28px;width:310px;height:36px;"></div>
<div class="t c" style="left:4px;top:33px;width:80px;color:#46d89a;font-size:21px;line-height:26px;height:26px;letter-spacing:.55px;text-indent:.55px">252</div>
<svg class="a" style="left:85px;top:42px" width="9" height="8"><path d="M0.4 8h8.2l-4.1-7.8z" fill="#38e0a0"/></svg>
<div class="t c" style="left:99px;top:39px;width:40px;color:#46d89a;"><span style="letter-spacing:0.326px;margin-right:-0.326px">2</span></div>
<div class="t " style="left:141px;top:39px;width:60px;color:#46d89a;"><span style="letter-spacing:0.109px;margin-right:-0.109px">(0.80)</span></div>
<div class="t " style="left:195px;top:31px;width:40px;color:#a8a8a8;">Vol</div>
<div class="t " style="left:195px;top:48px;width:40px;color:#a8a8a8;">Val(T)</div>
<div class="t r" style="left:229px;top:31px;width:80px;"><span style="letter-spacing:0.232px;margin-right:-0.232px">468,425</span></div>
<div class="t r" style="left:229px;top:48px;width:80px;"><span style="letter-spacing:0.194px;margin-right:-0.194px">12,322,239</span></div>
<div class="a box" style="left:3px;top:66px;width:310px;height:55px;background:#303030"></div>
<div class="a blk" style="left:82px;top:67px;width:78px;height:53px;"></div>
<div class="a blk" style="left:236px;top:67px;width:76px;height:53px;"></div>
<div class="t c" style="left:4px;top:69px;width:78px;">Prev</div>
<div class="t r" style="left:82px;top:69px;width:74px;color:#46d89a;"><span style="letter-spacing:0.326px;margin-right:-0.326px">250</span></div>
<div class="t c" style="left:160px;top:69px;width:76px;">High</div>
<div class="t r" style="left:236px;top:69px;width:73px;color:#46d89a;"><span style="letter-spacing:0.326px;margin-right:-0.326px">276</span></div>
<div class="t c" style="left:4px;top:87px;width:78px;letter-spacing:.21px;text-indent:.21px">Limit Up</div>
<div class="t r" style="left:82px;top:87px;width:74px;color:#46d89a;"><span style="letter-spacing:0.326px;margin-right:-0.326px">312</span></div>
<div class="t c" style="left:160px;top:87px;width:76px;">Open</div>
<div class="t r" style="left:236px;top:87px;width:73px;color:#46d89a;"><span style="letter-spacing:0.326px;margin-right:-0.326px">268</span></div>
<div class="t c" style="left:4px;top:105px;width:78px;letter-spacing:.17px;text-indent:.17px">Limit Down</div>
<div class="t r" style="left:82px;top:105px;width:74px;color:#ea3737;"><span style="letter-spacing:0.326px;margin-right:-0.326px">214</span></div>
<div class="t c" style="left:160px;top:105px;width:76px;">Low</div>
<div class="t r" style="left:236px;top:105px;width:73px;color:#ea3737;"><span style="letter-spacing:0.326px;margin-right:-0.326px">244</span></div>
<div class="a box" style="left:3px;top:123px;width:310px;height:215px;background:#303030"></div>
<div class="a blk" style="left:4px;top:141px;width:297px;height:180px;"></div>
<div class="a " style="left:4px;top:141px;width:11px;height:180px;background:#b45d5f"></div>
<div class="a " style="left:301px;top:141px;width:11px;height:180px;background:#5c8674"></div>
<div class="a " style="left:4px;top:158px;width:11px;height:1px;background:#5a2c2c"></div>
<div class="a " style="left:301px;top:158px;width:11px;height:1px;background:#2c4a3c"></div>
<div class="a " style="left:4px;top:176px;width:11px;height:1px;background:#5a2c2c"></div>
<div class="a " style="left:301px;top:176px;width:11px;height:1px;background:#2c4a3c"></div>
<div class="a " style="left:4px;top:194px;width:11px;height:1px;background:#5a2c2c"></div>
<div class="a " style="left:301px;top:194px;width:11px;height:1px;background:#2c4a3c"></div>
<div class="a " style="left:4px;top:212px;width:11px;height:1px;background:#5a2c2c"></div>
<div class="a " style="left:301px;top:212px;width:11px;height:1px;background:#2c4a3c"></div>
<div class="a " style="left:4px;top:230px;width:11px;height:1px;background:#5a2c2c"></div>
<div class="a " style="left:301px;top:230px;width:11px;height:1px;background:#2c4a3c"></div>
<div class="a " style="left:4px;top:248px;width:11px;height:1px;background:#5a2c2c"></div>
<div class="a " style="left:301px;top:248px;width:11px;height:1px;background:#2c4a3c"></div>
<div class="a " style="left:4px;top:266px;width:11px;height:1px;background:#5a2c2c"></div>
<div class="a " style="left:301px;top:266px;width:11px;height:1px;background:#2c4a3c"></div>
<div class="a " style="left:4px;top:284px;width:11px;height:1px;background:#5a2c2c"></div>
<div class="a " style="left:301px;top:284px;width:11px;height:1px;background:#2c4a3c"></div>
<div class="a " style="left:4px;top:302px;width:11px;height:1px;background:#5a2c2c"></div>
<div class="a " style="left:301px;top:302px;width:11px;height:1px;background:#2c4a3c"></div>
<div class="a vl" style="left:89px;top:124px;width:1px;height:16px;background:#3c3c3c"></div>
<div class="a vl" style="left:89px;top:140px;width:1px;height:181px;"></div>
<div class="a vl" style="left:89px;top:321px;width:1px;height:16px;background:#393939"></div>
<div class="a vl" style="left:156px;top:124px;width:1px;height:16px;background:#3c3c3c"></div>
<div class="a vl" style="left:156px;top:140px;width:1px;height:181px;"></div>
<div class="a vl" style="left:225px;top:124px;width:1px;height:16px;background:#3c3c3c"></div>
<div class="a vl" style="left:225px;top:140px;width:1px;height:181px;"></div>
<div class="a vl" style="left:225px;top:321px;width:1px;height:16px;background:#393939"></div>
<div class="a vl" style="left:15px;top:321px;width:1px;height:16px;background:#383838"></div>
<div class="a vl" style="left:300px;top:321px;width:1px;height:16px;background:#383838"></div>
<div class="t c" style="left:15px;top:125px;width:74px;">Bid Vol</div>
<div class="t c" style="left:90px;top:125px;width:66px;">Bid</div>
<div class="t c" style="left:157px;top:125px;width:68px;">Offer</div>
<div class="t c" style="left:226px;top:125px;width:75px;">Offer Vol</div>
<div class="a hl" style="left:4px;top:140px;width:308px;height:1px;"></div>
<div class="a hl" style="left:15px;top:230px;width:286px;height:1px;background:#404040"></div>
<div class="a hl" style="left:4px;top:320px;width:308px;height:1px;background:#3a3a3a"></div>
<svg class="a" style="left:4px;top:126px" width="11" height="14"><path d="M1 8.5H3.5V12.5H9.5V8M6.5 1V6.6M4.3 4.4L6.5 6.6L8.7 4.4" fill="none" stroke="#eaa0a8" stroke-width="1" stroke-linejoin="round"/></svg>
<svg class="a" style="left:301px;top:126px" width="11" height="14"><path d="M1 8.5H3.5V12.5H9.5V8M6.5 7V1.6M4.3 3.8L6.5 1.6L8.7 3.8" fill="none" stroke="#8fdcb9" stroke-width="1" stroke-linejoin="round"/></svg>
<div class="a " style="left:15px;top:155px;width:74px;height:3px;background:#a83a3c"></div>
<div class="a " style="left:226px;top:155px;width:6px;height:3px;background:#2f7d60"></div>
<div class="t r" style="left:15px;top:143px;width:71px;"><span style="letter-spacing:0.194px;margin-right:-0.194px">8,104</span></div>
<div class="t r" style="left:90px;top:143px;width:63px;color:#46d89a;"><span style="letter-spacing:0.326px;margin-right:-0.326px">252</span></div>
<div class="t r" style="left:157px;top:143px;width:65px;color:#46d89a;"><span style="letter-spacing:0.326px;margin-right:-0.326px">254</span></div>
<div class="t r" style="left:226px;top:143px;width:71px;"><span style="letter-spacing:0.326px;margin-right:-0.326px">822</span></div>
<div class="a " style="left:90px;top:141px;width:67px;height:17px;border:1px solid #c93535"></div>
<div class="t r" style="left:15px;top:323px;width:71px;"><span style="letter-spacing:0.194px;margin-right:-0.194px">8,104</span></div>
<div class="t c" style="left:90px;top:323px;width:135px;color:#46d89a;"><span style="letter-spacing:0.194px;margin-right:-0.194px">7,282</span></div>
<div class="t r" style="left:226px;top:323px;width:71px;"><span style="letter-spacing:0.326px;margin-right:-0.326px">822</span></div>
<div class="a box" style="left:3px;top:341px;width:310px;height:107px;background:#303030;border-bottom:none"></div>
<div class="a blk" style="left:4px;top:360px;width:290px;height:88px;"></div>
<div class="a " style="left:294px;top:342px;width:1px;height:106px;background:#000"></div>
<div class="a vl" style="left:57px;top:342px;width:1px;height:17px;background:#3c3c3c"></div>
<div class="a vl" style="left:57px;top:359px;width:1px;height:89px;"></div>
<div class="a vl" style="left:109px;top:342px;width:1px;height:17px;background:#3c3c3c"></div>
<div class="a vl" style="left:109px;top:359px;width:1px;height:89px;"></div>
<div class="a vl" style="left:201px;top:342px;width:1px;height:17px;background:#3c3c3c"></div>
<div class="a vl" style="left:201px;top:359px;width:1px;height:89px;"></div>
<div class="t c" style="left:4px;top:344px;width:53px;">Price</div>
<div class="t c" style="left:58px;top:344px;width:51px;">Freq</div>
<div class="t c" style="left:110px;top:344px;width:91px;">Volume</div>
<div class="t c" style="left:202px;top:344px;width:92px;">Value(T)</div>
<div class="t r" style="left:4px;top:362px;width:50px;color:#46d89a;"><span style="letter-spacing:0.326px;margin-right:-0.326px">276</span></div>
<div class="t r" style="left:58px;top:362px;width:48px;"><span style="letter-spacing:0.326px;margin-right:-0.326px">41</span></div>
<div class="t r" style="left:108px;top:362px;width:90px;"><span style="letter-spacing:0.194px;margin-right:-0.194px">5,010</span></div>
<div class="t r" style="left:202px;top:362px;width:88px;"><span style="letter-spacing:0.232px;margin-right:-0.232px">138,276</span></div>
<div class="t r" style="left:4px;top:380px;width:50px;color:#46d89a;"><span style="letter-spacing:0.326px;margin-right:-0.326px">274</span></div>
<div class="t r" style="left:58px;top:380px;width:48px;"><span style="letter-spacing:0.326px;margin-right:-0.326px">215</span></div>
<div class="t r" style="left:108px;top:380px;width:90px;"><span style="letter-spacing:0.216px;margin-right:-0.216px">24,693</span></div>
<div class="t r" style="left:202px;top:380px;width:88px;"><span style="letter-spacing:0.232px;margin-right:-0.232px">676,588</span></div>
<div class="t r" style="left:4px;top:398px;width:50px;color:#46d89a;"><span style="letter-spacing:0.326px;margin-right:-0.326px">272</span></div>
<div class="t r" style="left:58px;top:398px;width:48px;"><span style="letter-spacing:0.326px;margin-right:-0.326px">263</span></div>
<div class="t r" style="left:108px;top:398px;width:90px;"><span style="letter-spacing:0.216px;margin-right:-0.216px">21,776</span></div>
<div class="t r" style="left:202px;top:398px;width:88px;"><span style="letter-spacing:0.232px;margin-right:-0.232px">592,307</span></div>
<div class="t r" style="left:4px;top:416px;width:50px;color:#46d89a;"><span style="letter-spacing:0.326px;margin-right:-0.326px">270</span></div>
<div class="t r" style="left:58px;top:416px;width:48px;"><span style="letter-spacing:0.326px;margin-right:-0.326px">701</span></div>
<div class="t r" style="left:108px;top:416px;width:90px;"><span style="letter-spacing:0.232px;margin-right:-0.232px">102,885</span></div>
<div class="t r" style="left:202px;top:416px;width:88px;"><span style="letter-spacing:0.179px;margin-right:-0.179px">2,777,895</span></div>
<div class="t r" style="left:4px;top:434px;width:50px;color:#46d89a;"><span style="letter-spacing:0.326px;margin-right:-0.326px">268</span></div>
<div class="t r" style="left:58px;top:434px;width:48px;"><span style="letter-spacing:0.326px;margin-right:-0.326px">541</span></div>
<div class="t r" style="left:108px;top:434px;width:90px;"><span style="letter-spacing:0.216px;margin-right:-0.216px">50,134</span></div>
<div class="t r" style="left:202px;top:434px;width:88px;"><span style="letter-spacing:0.179px;margin-right:-0.179px">1,343,591</span></div>
<div class="a hl" style="left:4px;top:359px;width:290px;height:1px;"></div>
<div class="a " style="left:295px;top:342px;width:17px;height:106px;background:#424242"></div>
<div class="a " style="left:295px;top:342px;width:16px;height:17px;background:#2c2c2c"></div>
<div class="a " style="left:295px;top:432px;width:16px;height:16px;background:#2c2c2c"></div>
<div class="a " style="left:295px;top:360px;width:16px;height:15px;background:#2c2c2c"></div>
<svg class="a" style="left:296px;top:363px" width="16" height="9"><path d="M3 1.5h9M3 4.5h9M3 7.5h9" stroke="#555c66" stroke-width="1"/></svg>
<svg class="a" style="left:296px;top:342px" width="16" height="18"><path d="M3.8 11.3h7.8l-3.9-4.3z" fill="#fff"/></svg>
<svg class="a" style="left:296px;top:432px" width="16" height="16"><path d="M3.8 6.7h7.8l-3.9 4.3z" fill="#fff"/></svg>
</div>
<div class="p" style="left:1276px">
<div class="a top"></div>
<div class="a gap"></div><div class="a sep"></div>
<div class="a bot"></div>
<div class="a " style="left:3px;top:3px;width:89px;height:19px;background:#000"></div>
<div class="a " style="left:4px;top:4px;width:55px;height:17px;background:#d9d9d9"></div>
<div class="t " style="left:5px;top:6px;width:54px;color:#000;">DWGL</div>
<div class="a " style="left:60px;top:4px;width:13px;height:17px;background:#d9d9d9"></div>
<svg class="a" style="left:60px;top:4px" width="13" height="18"><path d="M3.1 8h7.2l-3.6 3.9z" fill="#000"/></svg>
<div class="a " style="left:74px;top:4px;width:17px;height:17px;background:#566274"></div>
<svg class="a" style="left:74px;top:4px" width="17" height="18"><circle cx="7.2" cy="7.7" r="4.3" fill="none" stroke="#e4eaf2" stroke-width="1.1"/><path d="M10.3 11l4.3 4.4" stroke="#e4eaf2" stroke-width="1.4" fill="none"/></svg>
<div class="a " style="left:96px;top:3px;width:135px;height:20px;background:#dbdbdb;border-bottom:1px solid #fff;border-right:1px solid #fff;border-top:1px solid #2d333d;border-left:1px solid #2d333d"></div>
<div class="t" style="left:99px;top:6px;width:129px;color:#000;overflow:hidden;letter-spacing:.2px">Dwi Guna Laksana Tbk.</div>
<svg class="a" style="left:224px;top:16px" width="5" height="5"><path d="M5 0v5h-5z" fill="#000"/></svg>
<div class="a btn" style="left:236px;top:3px;width:18.5px;height:19.5px;"></div>
<svg class="a" style="left:236px;top:4px" width="18" height="18"><path d="M6.2 3h5.6l-2.8 2.8z M6.2 13.7h5.6l-2.8-2.8z" fill="#f2f5f8"/><path d="M3 8.5h11" stroke="#f2f5f8" stroke-width="1"/></svg>
<div class="a btn" style="left:259px;top:3px;width:53px;height:19.5px;"></div>
<svg class="a" style="left:263px;top:7px" width="13" height="13"><path d="M7.2 3.2A3.4 3.4 0 1 0 8.8 7" fill="none" stroke="#f6f8fb" stroke-width="1.5"/><path d="M7.9 7.2L10.6 2.7L13.3 7.2Z" fill="#f4f6f9"/></svg>
<div class="t " style="left:279px;top:7px;width:34px;color:#f6f8fa;font-size:13.5px;letter-spacing:-0.9px">Load</div>
<div class="a box" style="left:3px;top:28px;width:310px;height:36px;"></div>
<div class="t c" style="left:4px;top:33px;width:80px;color:#ea3737;font-size:21px;line-height:26px;height:26px;letter-spacing:.55px;text-indent:.55px">322</div>
<svg class="a" style="left:85px;top:42px" width="9" height="8"><path d="M0.4 0h8.2l-4.1 7.8z" fill="#f82c2c"/></svg>
<div class="t c" style="left:99px;top:39px;width:40px;color:#ea3737;"><span style="letter-spacing:0.326px;margin-right:-0.326px">20</span></div>
<div class="t " style="left:141px;top:39px;width:60px;color:#ea3737;"><span style="letter-spacing:0.109px;margin-right:-0.109px">(5.84)</span></div>
<div class="t " style="left:195px;top:31px;width:40px;color:#a8a8a8;">Vol</div>
<div class="t " style="left:195px;top:48px;width:40px;color:#a8a8a8;">Val(T)</div>
<div class="t r" style="left:229px;top:31px;width:80px;"><span style="letter-spacing:0.232px;margin-right:-0.232px">216,587</span></div>
<div class="t r" style="left:229px;top:48px;width:80px;"><span style="letter-spacing:0.179px;margin-right:-0.179px">7,474,054</span></div>
<div class="a box" style="left:3px;top:66px;width:310px;height:55px;background:#303030"></div>
<div class="a blk" style="left:82px;top:67px;width:78px;height:53px;"></div>
<div class="a blk" style="left:236px;top:67px;width:76px;height:53px;"></div>
<div class="t c" style="left:4px;top:69px;width:78px;">Prev</div>
<div class="t r" style="left:82px;top:69px;width:74px;color:#46d89a;"><span style="letter-spacing:0.326px;margin-right:-0.326px">342</span></div>
<div class="t c" style="left:160px;top:69px;width:76px;">High</div>
<div class="t r" style="left:236px;top:69px;width:73px;color:#46d89a;"><span style="letter-spacing:0.326px;margin-right:-0.326px">364</span></div>
<div class="t c" style="left:4px;top:87px;width:78px;letter-spacing:.21px;text-indent:.21px">Limit Up</div>
<div class="t r" style="left:82px;top:87px;width:74px;color:#46d89a;"><span style="letter-spacing:0.326px;margin-right:-0.326px">426</span></div>
<div class="t c" style="left:160px;top:87px;width:76px;">Open</div>
<div class="t r" style="left:236px;top:87px;width:73px;color:#46d89a;"><span style="letter-spacing:0.326px;margin-right:-0.326px">352</span></div>
<div class="t c" style="left:4px;top:105px;width:78px;letter-spacing:.17px;text-indent:.17px">Limit Down</div>
<div class="t r" style="left:82px;top:105px;width:74px;color:#ea3737;"><span style="letter-spacing:0.326px;margin-right:-0.326px">292</span></div>
<div class="t c" style="left:160px;top:105px;width:76px;">Low</div>
<div class="t r" style="left:236px;top:105px;width:73px;color:#ea3737;"><span style="letter-spacing:0.326px;margin-right:-0.326px">322</span></div>
<div class="a box" style="left:3px;top:123px;width:310px;height:215px;background:#303030"></div>
<div class="a blk" style="left:4px;top:141px;width:297px;height:180px;"></div>
<div class="a " style="left:4px;top:141px;width:11px;height:180px;background:#b45d5f"></div>
<div class="a " style="left:301px;top:141px;width:11px;height:180px;background:#5c8674"></div>
<div class="a " style="left:4px;top:158px;width:11px;height:1px;background:#5a2c2c"></div>
<div class="a " style="left:301px;top:158px;width:11px;height:1px;background:#2c4a3c"></div>
<div class="a " style="left:4px;top:176px;width:11px;height:1px;background:#5a2c2c"></div>
<div class="a " style="left:301px;top:176px;width:11px;height:1px;background:#2c4a3c"></div>
<div class="a " style="left:4px;top:194px;width:11px;height:1px;background:#5a2c2c"></div>
<div class="a " style="left:301px;top:194px;width:11px;height:1px;background:#2c4a3c"></div>
<div class="a " style="left:4px;top:212px;width:11px;height:1px;background:#5a2c2c"></div>
<div class="a " style="left:301px;top:212px;width:11px;height:1px;background:#2c4a3c"></div>
<div class="a " style="left:4px;top:230px;width:11px;height:1px;background:#5a2c2c"></div>
<div class="a " style="left:301px;top:230px;width:11px;height:1px;background:#2c4a3c"></div>
<div class="a " style="left:4px;top:248px;width:11px;height:1px;background:#5a2c2c"></div>
<div class="a " style="left:301px;top:248px;width:11px;height:1px;background:#2c4a3c"></div>
<div class="a " style="left:4px;top:266px;width:11px;height:1px;background:#5a2c2c"></div>
<div class="a " style="left:301px;top:266px;width:11px;height:1px;background:#2c4a3c"></div>
<div class="a " style="left:4px;top:284px;width:11px;height:1px;background:#5a2c2c"></div>
<div class="a " style="left:301px;top:284px;width:11px;height:1px;background:#2c4a3c"></div>
<div class="a " style="left:4px;top:302px;width:11px;height:1px;background:#5a2c2c"></div>
<div class="a " style="left:301px;top:302px;width:11px;height:1px;background:#2c4a3c"></div>
<div class="a vl" style="left:89px;top:124px;width:1px;height:16px;background:#3c3c3c"></div>
<div class="a vl" style="left:89px;top:140px;width:1px;height:181px;"></div>
<div class="a vl" style="left:89px;top:321px;width:1px;height:16px;background:#393939"></div>
<div class="a vl" style="left:156px;top:124px;width:1px;height:16px;background:#3c3c3c"></div>
<div class="a vl" style="left:156px;top:140px;width:1px;height:181px;"></div>
<div class="a vl" style="left:225px;top:124px;width:1px;height:16px;background:#3c3c3c"></div>
<div class="a vl" style="left:225px;top:140px;width:1px;height:181px;"></div>
<div class="a vl" style="left:225px;top:321px;width:1px;height:16px;background:#393939"></div>
<div class="a vl" style="left:15px;top:321px;width:1px;height:16px;background:#383838"></div>
<div class="a vl" style="left:300px;top:321px;width:1px;height:16px;background:#383838"></div>
<div class="t c" style="left:15px;top:125px;width:74px;">Bid Vol</div>
<div class="t c" style="left:90px;top:125px;width:66px;">Bid</div>
<div class="t c" style="left:157px;top:125px;width:68px;">Offer</div>
<div class="t c" style="left:226px;top:125px;width:75px;">Offer Vol</div>
<div class="a hl" style="left:4px;top:140px;width:308px;height:1px;"></div>
<div class="a hl" style="left:15px;top:230px;width:286px;height:1px;background:#404040"></div>
<div class="a hl" style="left:4px;top:320px;width:308px;height:1px;background:#3a3a3a"></div>
<svg class="a" style="left:4px;top:126px" width="11" height="14"><path d="M1 8.5H3.5V12.5H9.5V8M6.5 1V6.6M4.3 4.4L6.5 6.6L8.7 4.4" fill="none" stroke="#eaa0a8" stroke-width="1" stroke-linejoin="round"/></svg>
<svg class="a" style="left:301px;top:126px" width="11" height="14"><path d="M1 8.5H3.5V12.5H9.5V8M6.5 7V1.6M4.3 3.8L6.5 1.6L8.7 3.8" fill="none" stroke="#8fdcb9" stroke-width="1" stroke-linejoin="round"/></svg>
<div class="a " style="left:15px;top:155px;width:74px;height:3px;background:#a83a3c"></div>
<div class="a " style="left:226px;top:155px;width:5px;height:3px;background:#2f7d60"></div>
<div class="t r" style="left:15px;top:143px;width:71px;"><span style="letter-spacing:0.194px;margin-right:-0.194px">1,629</span></div>
<div class="t r" style="left:90px;top:143px;width:63px;color:#ea3737;"><span style="letter-spacing:0.326px;margin-right:-0.326px">320</span></div>
<div class="t r" style="left:157px;top:143px;width:65px;color:#ea3737;"><span style="letter-spacing:0.326px;margin-right:-0.326px">322</span></div>
<div class="t r" style="left:226px;top:143px;width:71px;"><span style="letter-spacing:0.326px;margin-right:-0.326px">146</span></div>
<div class="a " style="left:157px;top:141px;width:69px;height:17px;border:1px solid #c93535"></div>
<div class="t r" style="left:15px;top:323px;width:71px;"><span style="letter-spacing:0.194px;margin-right:-0.194px">1,629</span></div>
<div class="t c" style="left:90px;top:323px;width:135px;color:#46d89a;"><span style="letter-spacing:0.194px;margin-right:-0.194px">1,483</span></div>
<div class="t r" style="left:226px;top:323px;width:71px;"><span style="letter-spacing:0.326px;margin-right:-0.326px">146</span></div>
<div class="a box" style="left:3px;top:341px;width:310px;height:107px;background:#303030;border-bottom:none"></div>
<div class="a blk" style="left:4px;top:360px;width:290px;height:88px;"></div>
<div class="a " style="left:294px;top:342px;width:1px;height:106px;background:#000"></div>
<div class="a vl" style="left:57px;top:342px;width:1px;height:17px;background:#3c3c3c"></div>
<div class="a vl" style="left:57px;top:359px;width:1px;height:89px;"></div>
<div class="a vl" style="left:109px;top:342px;width:1px;height:17px;background:#3c3c3c"></div>
<div class="a vl" style="left:109px;top:359px;width:1px;height:89px;"></div>
<div class="a vl" style="left:201px;top:342px;width:1px;height:17px;background:#3c3c3c"></div>
<div class="a vl" style="left:201px;top:359px;width:1px;height:89px;"></div>
<div class="t c" style="left:4px;top:344px;width:53px;">Price</div>
<div class="t c" style="left:58px;top:344px;width:51px;">Freq</div>
<div class="t c" style="left:110px;top:344px;width:91px;">Volume</div>
<div class="t c" style="left:202px;top:344px;width:92px;">Value(T)</div>
<div class="t r" style="left:4px;top:362px;width:50px;color:#46d89a;"><span style="letter-spacing:0.326px;margin-right:-0.326px">364</span></div>
<div class="t r" style="left:58px;top:362px;width:48px;"><span style="letter-spacing:0.326px;margin-right:-0.326px">24</span></div>
<div class="t r" style="left:108px;top:362px;width:90px;"><span style="letter-spacing:0.194px;margin-right:-0.194px">2,275</span></div>
<div class="t r" style="left:202px;top:362px;width:88px;"><span style="letter-spacing:0.216px;margin-right:-0.216px">82,810</span></div>
<div class="t r" style="left:4px;top:380px;width:50px;color:#46d89a;"><span style="letter-spacing:0.326px;margin-right:-0.326px">362</span></div>
<div class="t r" style="left:58px;top:380px;width:48px;"><span style="letter-spacing:0.326px;margin-right:-0.326px">52</span></div>
<div class="t r" style="left:108px;top:380px;width:90px;"><span style="letter-spacing:0.194px;margin-right:-0.194px">4,941</span></div>
<div class="t r" style="left:202px;top:380px;width:88px;"><span style="letter-spacing:0.232px;margin-right:-0.232px">178,864</span></div>
<div class="t r" style="left:4px;top:398px;width:50px;color:#46d89a;"><span style="letter-spacing:0.326px;margin-right:-0.326px">360</span></div>
<div class="t r" style="left:58px;top:398px;width:48px;"><span style="letter-spacing:0.326px;margin-right:-0.326px">123</span></div>
<div class="t r" style="left:108px;top:398px;width:90px;"><span style="letter-spacing:0.216px;margin-right:-0.216px">10,696</span></div>
<div class="t r" style="left:202px;top:398px;width:88px;"><span style="letter-spacing:0.232px;margin-right:-0.232px">385,056</span></div>
<div class="t r" style="left:4px;top:416px;width:50px;color:#46d89a;"><span style="letter-spacing:0.326px;margin-right:-0.326px">358</span></div>
<div class="t r" style="left:58px;top:416px;width:48px;"><span style="letter-spacing:0.326px;margin-right:-0.326px">257</span></div>
<div class="t r" style="left:108px;top:416px;width:90px;"><span style="letter-spacing:0.216px;margin-right:-0.216px">14,603</span></div>
<div class="t r" style="left:202px;top:416px;width:88px;"><span style="letter-spacing:0.232px;margin-right:-0.232px">522,787</span></div>
<div class="t r" style="left:4px;top:434px;width:50px;color:#46d89a;"><span style="letter-spacing:0.326px;margin-right:-0.326px">356</span></div>
<div class="t r" style="left:58px;top:434px;width:48px;"><span style="letter-spacing:0.326px;margin-right:-0.326px">236</span></div>
<div class="t r" style="left:108px;top:434px;width:90px;"><span style="letter-spacing:0.216px;margin-right:-0.216px">21,896</span></div>
<div class="t r" style="left:202px;top:434px;width:88px;"><span style="letter-spacing:0.232px;margin-right:-0.232px">779,497</span></div>
<div class="a hl" style="left:4px;top:359px;width:290px;height:1px;"></div>
<div class="a " style="left:295px;top:342px;width:17px;height:106px;background:#424242"></div>
<div class="a " style="left:295px;top:342px;width:16px;height:17px;background:#2c2c2c"></div>
<div class="a " style="left:295px;top:432px;width:16px;height:16px;background:#2c2c2c"></div>
<div class="a " style="left:295px;top:360px;width:16px;height:12px;background:#2c2c2c"></div>
<svg class="a" style="left:296px;top:362px" width="16" height="9"><path d="M3 1.5h9M3 4.5h9M3 7.5h9" stroke="#555c66" stroke-width="1"/></svg>
<svg class="a" style="left:296px;top:342px" width="16" height="18"><path d="M3.8 11.3h7.8l-3.9-4.3z" fill="#fff"/></svg>
<svg class="a" style="left:296px;top:432px" width="16" height="16"><path d="M3.8 6.7h7.8l-3.9 4.3z" fill="#fff"/></svg>
</div>
</body></html>
